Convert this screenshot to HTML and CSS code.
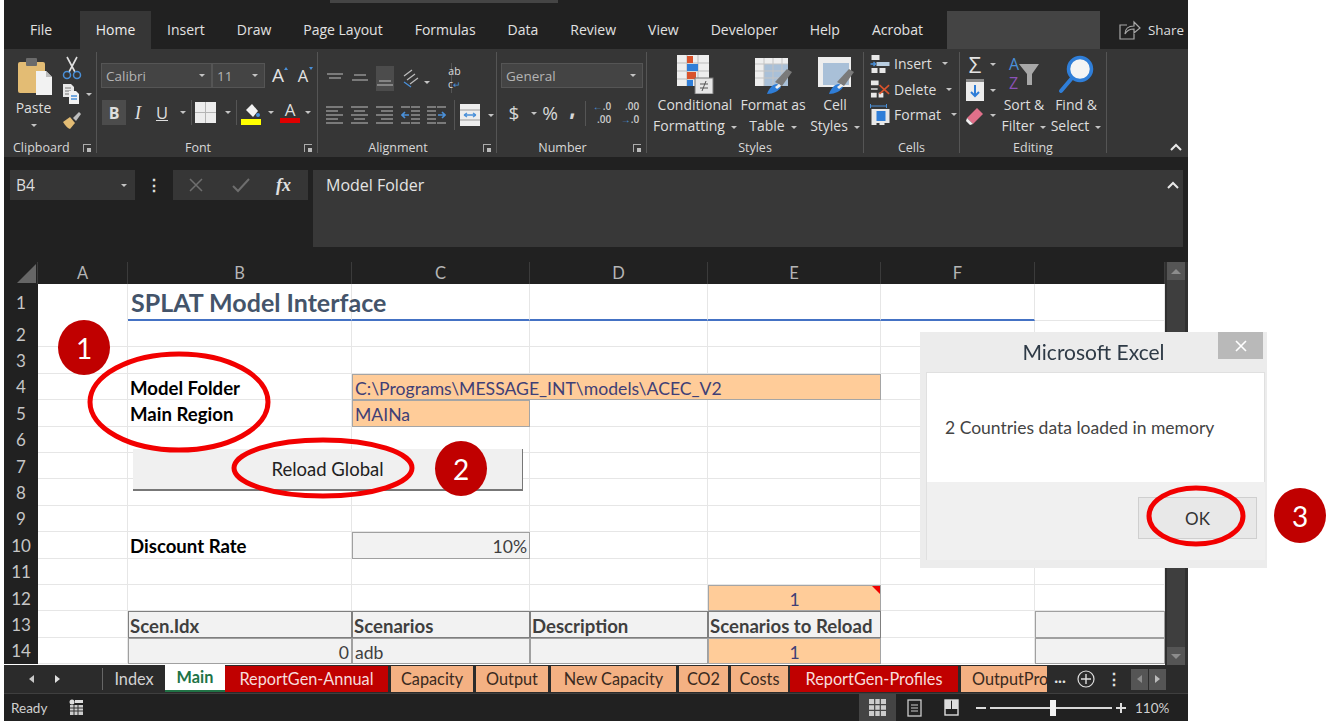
FILE: index.html
```html
<!DOCTYPE html>
<html lang="en">
<head>
<meta charset="utf-8">
<title>SPLAT Model Interface</title>
<link rel="stylesheet" href="styles.css">
</head>
<body>
<div class="stage">
  <div class="window">
    <div class="titlebar"><div class="title-box"></div></div>
    <div class="menubar">
      <span class="menu file">File</span><span class="menu active">Home</span><span class="menu">Insert</span><span class="menu">Draw</span><span class="menu">Page Layout</span><span class="menu">Formulas</span><span class="menu">Data</span><span class="menu">Review</span><span class="menu">View</span><span class="menu">Developer</span><span class="menu">Help</span><span class="menu">Acrobat</span>
      <div class="search-box"></div>
      <div class="share">
        <svg width="22" height="20" viewBox="0 0 22 20"><path d="M8 5H1v14h14v-5M6 14c0-5 3-8 9-8V2l6 6-6 5V9c-4 0-7 1-9 5z" fill="none" stroke="#a8a8a8" stroke-width="1.2"/></svg>
        <span>Share</span>
      </div>
    </div>

    <div class="ribbon">
      <section class="group g-clip">
        <div class="body clip-body">
          <div class="paste">
            <svg width="38" height="40" viewBox="0 0 38 40"><rect x="1" y="6" width="27" height="31" rx="2" fill="#e3bc74"/><rect x="9" y="2" width="11" height="8" rx="1" fill="#6b6b6b"/><path d="M19 15h10l6 6v18H19z" fill="#f2f2f2"/><path d="M29 15v6h6" fill="#bdbdbd"/></svg>
            <span class="paste-label">Paste</span>
            <i class="caret caret-paste"></i>
          </div>
          <div class="clip-tools">
            <span class="tool"><svg width="20" height="24" viewBox="0 0 20 24"><path d="M5 1l8 15M15 1L7 16" stroke="#e0e0e0" stroke-width="1.6" fill="none"/><circle cx="5" cy="19" r="3.5" fill="none" stroke="#4a90d9" stroke-width="1.5"/><circle cx="15" cy="19" r="3.5" fill="none" stroke="#4a90d9" stroke-width="1.5"/></svg></span>
            <span class="tool"><svg width="18" height="22" viewBox="0 0 18 22"><path d="M1 1h8l3 3v10H1z" fill="#e8e8e8"/><path d="M3 5h6M3 8h6M3 11h6" stroke="#777"/><path d="M7 8h7l3 3v10H7z" fill="#f2f2f2"/><path d="M9 13h6M9 16h6" stroke="#4a90d9" stroke-width="1.4"/></svg><i class="caret caret-copy"></i></span>
            <span class="tool"><svg width="20" height="20" viewBox="0 0 20 20"><path d="M1 12l7-5 5 6-5 6c-3-1-5-4-7-7z" fill="#e3bc74"/><path d="M11 8l6-6 2 2-5 7z" fill="#bdbdbd"/></svg></span>
          </div>
        </div>
        <div class="label label-clip"><span>Clipboard</span><i class="launcher"></i></div>
      </section>

      <section class="group g-font">
        <div class="body rows">
          <div class="font-row1">
            <div class="combo"><span>Calibri</span><i class="caret"></i></div>
            <div class="combo"><span>11</span><i class="caret"></i></div>
            <span class="grow-a big">A<b class="up"></b></span>
            <span class="grow-a small">A<b class="down"></b></span>
          </div>
          <div class="font-row2">
            <span class="ib on bold-b">B</span><span class="ib ital">I</span><span class="ib under">U</span><i class="caret"></i><i class="vsep"></i>
            <span class="ib"><svg width="21" height="21" viewBox="0 0 21 21"><rect width="21" height="21" fill="#ededed"/><path d="M10.5 0v21M0 10.5h21" stroke="#b5b5b5"/></svg></span><i class="caret"></i><i class="vsep"></i>
            <span class="ib"><svg width="22" height="24" viewBox="0 0 22 24"><path d="M6 9l6-6 6 7-5 6z" fill="#f2f2f2"/><circle cx="18" cy="14" r="2" fill="#4a90d9"/><rect x="1" y="18" width="20" height="6" fill="#ffff00"/></svg></span><i class="caret"></i>
            <span class="ib color-a">A</span><i class="caret"></i>
          </div>
        </div>
        <div class="label label-launch"><span>Font</span><i class="launcher"></i></div>
      </section>

      <section class="group g-align">
        <div class="body rows">
          <div class="align-row">
            <span class="ib"><svg width="18" height="10" viewBox="0 0 18 10"><path d="M1 1h16M3 5h12" stroke="#bdbdbd" stroke-width="1.2"/></svg></span>
            <span class="ib"><svg width="18" height="10" viewBox="0 0 18 10"><path d="M3 2h12M1 7h16" stroke="#bdbdbd" stroke-width="1.2"/></svg></span>
            <span class="ib on"><svg width="18" height="22" viewBox="0 0 18 22"><path d="M3 14h12M1 18h16" stroke="#bdbdbd" stroke-width="1.2"/></svg></span>
            <span class="ib"><svg width="20" height="20" viewBox="0 0 20 20"><path d="M3 8l8-6M6 12l8-6M9 16l8-6" stroke="#bdbdbd" stroke-width="1.2"/><path d="M3 14l7 5" stroke="#4a90d9" stroke-width="1.3"/></svg></span>
            <span class="cell-caret"><i class="caret"></i></span>
            <i class="vsep tall"></i>
            <span class="ib wrap"><span>ab</span><span>c<em>↵</em></span></span>
          </div>
          <div class="align-row second">
            <span class="ib"><svg width="17" height="20" viewBox="0 0 17 20"><path d="M0 2h17M0 6h12M0 10h17M0 14h12M0 18h17" stroke="#bdbdbd" stroke-width="1.2"/></svg></span>
            <span class="ib"><svg width="17" height="20" viewBox="0 0 17 20"><path d="M0 2h17M3 6h11M0 10h17M3 14h11M0 18h17" stroke="#bdbdbd" stroke-width="1.2"/></svg></span>
            <span class="ib"><svg width="17" height="20" viewBox="0 0 17 20"><path d="M0 2h17M5 6h12M0 10h17M5 14h12M0 18h17" stroke="#bdbdbd" stroke-width="1.2"/></svg></span>
            <span class="ib"><svg width="19" height="20" viewBox="0 0 19 20"><path d="M10 2h9M10 6h9M10 10h9M10 14h9M10 18h9M0 2h9M0 18h9" stroke="#bdbdbd" stroke-width="1.2"/><path d="M8 10H1M4 7l-3 3 3 3" stroke="#4a90d9" stroke-width="1.6" fill="none"/></svg></span>
            <span class="ib"><svg width="19" height="20" viewBox="0 0 19 20"><path d="M0 2h9M0 6h9M0 10h9M0 14h9M0 18h9M10 2h9M10 18h9" stroke="#bdbdbd" stroke-width="1.2"/><path d="M11 10h7M15 7l3 3-3 3" stroke="#4a90d9" stroke-width="1.6" fill="none"/></svg></span>
            <span></span>
            <i class="vsep tall"></i>
            <span class="ib"><svg width="20" height="22" viewBox="0 0 20 22"><rect width="20" height="22" fill="#ededed"/><path d="M0 6h20M0 16h20" stroke="#999"/><path d="M4 11h12M4 11l3-2M4 11l3 2M16 11l-3-2M16 11l-3 2" stroke="#4a90d9" stroke-width="1.3" fill="none"/></svg></span>
            <i class="caret"></i>
          </div>
        </div>
        <div class="label label-launch"><span>Alignment</span><i class="launcher"></i></div>
      </section>

      <section class="group g-num">
        <div class="body rows">
          <div class="num-row1"><div class="combo"><span>General</span><i class="caret"></i></div></div>
          <div class="num-row2">
            <span class="ib sym">$</span><i class="caret"></i><span class="ib sym">%</span><span class="ib sym comma">,</span><i class="vsep"></i>
            <span class="dec"><span><em>←</em>.0</span><span>.00</span></span>
            <span class="dec"><span>.00</span><span><em>→</em>.0</span></span>
          </div>
        </div>
        <div class="label label-launch"><span>Number</span><i class="launcher"></i></div>
      </section>

      <section class="group g-styles">
        <div class="body bigs">
          <div class="big-btn w-cond">
            <svg class="big-ico" width="40" height="40" viewBox="0 0 40 40"><rect x="2" y="1" width="32" height="31" fill="#eee"/><path d="M12 1v31M23 1v31M2 9h32M2 17h32M2 25h32" stroke="#bbb"/><rect x="12" y="2" width="6" height="7" fill="#d9532c"/><rect x="12" y="10" width="11" height="7" fill="#2f7ed8"/><rect x="12" y="18" width="9" height="7" fill="#d9532c"/><rect x="12" y="26" width="6" height="6" fill="#2f7ed8"/><rect x="20" y="24" width="18" height="16" fill="#e6e6e6" stroke="#777"/><path d="M25 30h8M25 34h8M27 37l4-10" stroke="#555" fill="none"/></svg>
            <span>Conditional</span><span>Formatting<i class="caret"></i></span>
          </div>
          <div class="big-btn w-table">
            <svg class="big-ico" width="40" height="40" viewBox="0 0 40 40"><rect x="2" y="4" width="33" height="28" fill="#eee"/><rect x="11" y="10" width="24" height="22" fill="#a9c0d8"/><path d="M11 4v28M20 4v28M29 4v28M2 10h33M2 17h33M2 24h33" stroke="#c4c4c4"/><path d="M22 28l12-13 5 3-10 14z" fill="#7a7a7a"/><path d="M14 40c2-6 6-10 10-10l4 3c-2 4-8 7-14 7z" fill="#2f7ed8"/><path d="M22 33l4-3 2 2-4 3z" fill="#eee"/></svg>
            <span>Format as</span><span>Table<i class="caret"></i></span>
          </div>
          <div class="big-btn w-cell">
            <svg class="big-ico" width="40" height="40" viewBox="0 0 40 40"><rect x="3" y="3" width="33" height="30" fill="#eee"/><rect x="8" y="9" width="26" height="22" fill="#a9c0d8"/><path d="M22 28l12-13 5 3-10 14z" fill="#7a7a7a"/><path d="M14 40c2-6 6-10 10-10l4 3c-2 4-8 7-14 7z" fill="#2f7ed8"/><path d="M22 33l4-3 2 2-4 3z" fill="#eee"/></svg>
            <span>Cell</span><span>Styles<i class="caret"></i></span>
          </div>
        </div>
        <div class="label"><span>Styles</span></div>
      </section>

      <section class="group g-cells">
        <div class="body cell-rows">
          <div class="cell-row"><svg width="20" height="20" viewBox="0 0 20 20"><path d="M1 1h8v5H1zM1 14h6v5H1zM9 14h6v5H9z" fill="#e8e8e8"/><rect x="6" y="8" width="13" height="4" fill="#b8cde0"/><path d="M0 10h5M3 8l2 2-2 2" stroke="#4a90d9" fill="none" stroke-width="1.4"/></svg><span>Insert</span><i class="caret"></i></div>
          <div class="cell-row"><svg width="22" height="20" viewBox="0 0 22 20"><path d="M1 1h8v5H1zM1 14h6v5H1zM9 14h5v5H9z" fill="#e8e8e8"/><path d="M10 6l10 9M20 6L10 15" stroke="#d9532c" stroke-width="1.7"/><path d="M1 9h7v2H1z" fill="#bbb"/></svg><span>Delete</span><i class="caret"></i></div>
          <div class="cell-row"><svg width="20" height="22" viewBox="0 0 20 22"><path d="M0 2h16M0 0v4M16 0v4" stroke="#4a90d9"/><rect x="1" y="5" width="18" height="14" fill="#e8e8e8"/><rect x="6" y="7" width="9" height="10" fill="#2f7ed8"/><path d="M1 20h5M9 20h5" stroke="#e8e8e8" stroke-width="2"/></svg><span>Format</span><i class="caret"></i></div>
        </div>
        <div class="label"><span>Cells</span></div>
      </section>

      <section class="group g-edit">
        <div class="body edit-body">
          <div class="edit-small">
            <div class="edit-row"><span class="sigma">Σ</span><i class="caret"></i></div>
            <div class="edit-row"><svg width="18" height="22" viewBox="0 0 18 22"><rect width="18" height="22" fill="#ededed"/><rect y="0" width="18" height="3" fill="#888"/><path d="M9 6v11M5 13l4 4 4-4" stroke="#2f7ed8" stroke-width="2" fill="none"/></svg><i class="caret"></i></div>
            <div class="edit-row"><svg width="18" height="20" viewBox="0 0 18 20"><path d="M1 12L11 2l6 6-10 10z" fill="#e0708a"/><path d="M1 12l6 6-3 1-4-4z" fill="#f2f2f2"/></svg><i class="caret"></i></div>
          </div>
          <div class="big-btn w-sort">
            <div class="big-ico sort-ico"><span class="az"><b>A</b><u>Z</u></span><svg width="20" height="24" viewBox="0 0 20 24"><path d="M0 1h20l-7 10v11H8V11z" fill="#a8a8a8"/></svg></div>
            <span>Sort &amp;</span><span>Filter<i class="caret"></i></span>
          </div>
          <div class="big-btn w-find">
            <svg class="big-ico" width="36" height="40" viewBox="0 0 36 40"><path d="M3 37l11-13" stroke="#2f7ed8" stroke-width="4" stroke-linecap="round"/><circle cx="22" cy="15" r="11.5" fill="#f4f4f4" stroke="#2f7ed8" stroke-width="3.5"/></svg>
            <span>Find &amp;</span><span>Select<i class="caret"></i></span>
          </div>
        </div>
        <div class="label"><span>Editing</span></div>
      </section>
      <div class="collapse-cell"><svg width="12" height="8" viewBox="0 0 12 8"><path d="M1 7l5-5 5 5" stroke="#e8e8e8" stroke-width="2" fill="none"/></svg></div>
    </div>

    <div class="formula-area">
      <div class="namebox"><span>B4</span><i class="caret"></i></div>
      <span class="dots">⋮</span>
      <div class="fx-buttons">
        <svg width="16" height="16" viewBox="0 0 16 16"><path d="M2 2l12 12M14 2L2 14" stroke="#6e6e6e" stroke-width="1.5"/></svg>
        <svg width="18" height="16" viewBox="0 0 18 16"><path d="M1 9l5 5L17 2" stroke="#6e6e6e" stroke-width="2" fill="none"/></svg>
        <span class="fx">fx</span>
      </div>
      <div class="formula-input"><span>Model Folder</span>
        <svg width="12" height="8" viewBox="0 0 12 8"><path d="M1 7l5-5 5 5" stroke="#e8e8e8" stroke-width="2" fill="none"/></svg>
      </div>
    </div>

    <div class="sheet-area">
      <div class="sheet">
        <div class="hd corner"><i></i></div><div class="hd">A</div><div class="hd">B</div><div class="hd">C</div><div class="hd">D</div><div class="hd">E</div><div class="hd">F</div><div class="hd"></div>

        <div class="rh">1</div><div class="c noline"></div><div class="c title span-b">SPLAT Model Interface</div><div class="c blue"></div><div class="c blue"></div><div class="c blue"></div><div class="c blue"></div><div class="c"></div>
        <div class="rh">2</div><div class="c"></div><div class="c"></div><div class="c"></div><div class="c"></div><div class="c"></div><div class="c"></div><div class="c"></div>
        <div class="rh">3</div><div class="c"></div><div class="c"></div><div class="c"></div><div class="c"></div><div class="c"></div><div class="c"></div><div class="c"></div>
        <div class="rh">4</div><div class="c"></div><div class="c b">Model Folder</div><div class="c input path">C:\Programs\MESSAGE_INT\models\ACEC_V2</div><div class="c"></div><div class="c"></div>
        <div class="rh">5</div><div class="c"></div><div class="c b">Main Region</div><div class="c input">MAINa</div><div class="c"></div><div class="c"></div><div class="c"></div><div class="c"></div>
        <div class="rh">6</div><div class="c"></div><div class="c"></div><div class="c"></div><div class="c"></div><div class="c"></div><div class="c"></div><div class="c"></div>
        <div class="rh">7</div><div class="c"></div><div class="c"></div><div class="c"></div><div class="c"></div><div class="c"></div><div class="c"></div><div class="c"></div>
        <div class="rh">8</div><div class="c"></div><div class="c"></div><div class="c"></div><div class="c"></div><div class="c"></div><div class="c"></div><div class="c"></div>
        <div class="rh">9</div><div class="c"></div><div class="c"></div><div class="c"></div><div class="c"></div><div class="c"></div><div class="c"></div><div class="c"></div>
        <div class="rh">10</div><div class="c"></div><div class="c b">Discount Rate</div><div class="c calc right">10%</div><div class="c"></div><div class="c"></div><div class="c"></div><div class="c"></div>
        <div class="rh">11</div><div class="c"></div><div class="c"></div><div class="c"></div><div class="c"></div><div class="c"></div><div class="c"></div><div class="c"></div>
        <div class="rh">12</div><div class="c"></div><div class="c"></div><div class="c"></div><div class="c"></div><div class="c input mid flag">1</div><div class="c"></div><div class="c"></div>
        <div class="rh">13</div><div class="c"></div><div class="c calc hb">Scen.Idx</div><div class="c calc hb">Scenarios</div><div class="c calc hb">Description</div><div class="c calc hb">Scenarios to Reload</div><div class="c"></div><div class="c calc"></div>
        <div class="rh">14</div><div class="c"></div><div class="c calc right">0</div><div class="c calc">adb</div><div class="c calc"></div><div class="c input mid">1</div><div class="c"></div><div class="c calc"></div>
      </div>
      <div class="vscroll">
        <div class="sb-btn"><i class="tri-up"></i></div>
        <div class="sb-track"></div>
        <div class="sb-btn"><i class="tri-down"></i></div>
      </div>
    </div>

    <div class="tabs-row">
      <div class="tab-nav"><i class="tri-l"></i><i class="tri-r"></i></div>
      <div class="sheet-tabs">
        <span class="st plain">Index</span>
        <span class="st active">Main</span>
        <span class="st red">ReportGen-Annual</span>
        <span class="st peach">Capacity</span>
        <span class="st peach">Output</span>
        <span class="st peach">New Capacity</span>
        <span class="st peach">CO2</span>
        <span class="st peach">Costs</span>
        <span class="st red">ReportGen-Profiles</span>
        <span class="st peach clip">OutputPro</span>
      </div>
      <div class="tab-tools">
        <span class="more">...</span>
        <span class="plus"><svg width="18" height="18" viewBox="0 0 18 18"><circle cx="9" cy="9" r="8" fill="none" stroke="#ddd" stroke-width="1.2"/><path d="M9 4v10M4 9h10" stroke="#ddd" stroke-width="1.4"/></svg></span>
        <span class="dots2">⋮</span>
        <span class="hs-btns"><i><b class="tri-l dim"></b></i><i><b class="tri-r dim"></b></i></span>
      </div>
    </div>

    <div class="status">
      <span class="ready">Ready</span>
      <svg class="macro" width="15" height="17" viewBox="0 0 15 17"><circle cx="3" cy="3" r="2.5" fill="#ddd"/><rect x="6" y="1" width="8" height="3" fill="#ddd"/><rect x="1" y="6" width="13" height="10" fill="#ccc"/><path d="M1 9h13M1 12h13M5 6v10M9 6v10" stroke="#333"/></svg>
      <div class="views">
        <span class="view on"><svg width="17" height="17" viewBox="0 0 17 17"><rect width="17" height="17" fill="#ccc"/><path d="M5.7 0v17M11.3 0v17M0 5.7h17M0 11.3h17" stroke="#444" stroke-width="1.2"/></svg></span>
        <span class="view"><svg width="15" height="18" viewBox="0 0 15 18"><rect x="1" y="1" width="13" height="16" fill="none" stroke="#ccc" stroke-width="1.3"/><path d="M4 6h7M4 9h7M4 12h7" stroke="#ccc"/></svg></span>
        <span class="view"><svg width="15" height="17" viewBox="0 0 15 17"><rect x="1" y="1" width="13" height="15" fill="none" stroke="#ddd" stroke-width="1.4"/><rect x="1" y="1" width="6" height="9" fill="#ddd"/><rect x="8" y="1" width="6" height="9" fill="#ddd"/></svg></span>
      </div>
      <div class="zoom">
        <span class="zm minus"></span>
        <span class="slider"><i></i></span>
        <span class="zm pluss"></span>
        <span class="pct">110%</span>
      </div>
    </div>
  </div>

  <button class="macro-btn">Reload Global</button>

  <svg class="marks" width="1340" height="728" viewBox="0 0 1340 728">
    <ellipse cx="179" cy="402" rx="89" ry="48" fill="none" stroke="#f20000" stroke-width="5"/>
    <ellipse cx="323" cy="468" rx="89" ry="28" fill="none" stroke="#f20000" stroke-width="5"/>
  </svg>

  <span class="num n1">1</span>
  <span class="num n2">2</span>

  <div class="dialog">
    <div class="dlg-head"><span class="dlg-title">Microsoft Excel</span><span class="dlg-x"><svg width="12" height="12" viewBox="0 0 12 12"><path d="M1 1l10 10M11 1L1 11" stroke="#fff" stroke-width="1.6"/></svg></span></div>
    <div class="dlg-msg">2 Countries data loaded in memory</div>
    <div class="dlg-foot"><button class="dlg-ok">OK</button></div>
  </div>
  <svg class="marks" width="1340" height="728" viewBox="0 0 1340 728">
    <ellipse cx="1196" cy="516" rx="47" ry="28" fill="none" stroke="#f20000" stroke-width="5"/>
  </svg>
  <span class="num n3">3</span>
</div>
</body>
</html>
```

FILE: styles.css
```css
* { box-sizing: border-box; }
html, body { margin: 0; padding: 0; background: #fff; }
body { font-family: "Open Sans", "Liberation Sans", sans-serif; color: #ddd; overflow: hidden; }
i, em, u { font-style: normal; text-decoration: none; }

.stage { position: relative; width: 1340px; height: 728px; overflow: hidden; filter: blur(0.5px); }
.window { width: 1184px; height: 720px; margin-left: 4px; background: #212121; display: flex; flex-direction: column; }

.titlebar { height: 11px; flex: none; padding-left: 326px; }
.title-box { width: 228px; height: 3px; background: #454545; }

.menubar { height: 38px; flex: none; display: flex; align-items: stretch; font-size: 14px; color: #e2e2e2; }
.menu { padding: 0 16px; line-height: 38px; white-space: nowrap; }
.menu.file { width: 76px; padding: 0 0 0 26px; }
.menu.active { background: #363636; padding: 0; width: 71px; text-align: center; color: #eee; }
.search-box { width: 153px; background: #444; margin-left: auto; }
.share { display: flex; align-items: center; width: 88px; padding-left: 19px; gap: 7px; font-size: 13.4px; color: #ddd; flex: none; }

.ribbon { height: 108px; flex: none; background: #363636; padding-top: 3px; display: flex; font-size: 14px; color: #dedede; }
.group { display: flex; flex-direction: column; height: 101px; border-right: 1px solid #555; flex: none; }
.body { height: 86px; flex: none; }
.label { position: relative; height: 15px; text-align: center; font-size: 12.5px; line-height: 19px; color: #d8d8d8; }
.label-launch { padding-right: 22px; }
.launcher { position: absolute; right: 5px; top: 6px; width: 8px; height: 8px; border-left: 1px solid #aaa; border-top: 1px solid #aaa; }
.launcher::after { content: ""; position: absolute; right: 0; bottom: 0; width: 4px; height: 4px; background: #bbb; }

.caret { display: inline-block; width: 0; height: 0; border-left: 3px solid transparent; border-right: 3px solid transparent; border-top: 3px solid #c4c4c4; flex: none; }
.vsep { display: block; width: 1px; background: #555; height: 25px; }
.vsep.tall { height: 30px; align-self: start; }
.ib { display: flex; align-items: center; justify-content: center; height: 25px; }
.ib.on { background: #4c4c4c; }

.g-clip { width: 93px; }
.clip-body { display: flex; padding-left: 9px; }
.paste { width: 44px; display: flex; flex-direction: column; align-items: center; padding-top: 4px; }
.paste svg { margin-bottom: 1px; margin-left: 2px; }
.paste-label { line-height: 21px; margin-top: 0; margin-left: -3px; }
.caret-paste { margin-top: 6px; margin-left: -3px; }
.clip-tools { display: flex; flex-direction: column; width: 36px; padding-left: 5px; padding-top: 3px; }
.tool { display: flex; align-items: center; gap: 5px; height: 26px; }
.caret-copy { margin-left: 1px; }
.label-clip { text-align: left; padding-left: 9px; }

.rows { display: flex; flex-direction: column; padding-top: 11px; gap: 12px; }
.g-font { width: 221px; padding-left: 4px; }
.font-row1 { display: flex; align-items: center; height: 25px; }
.combo { display: flex; align-items: center; justify-content: space-between; height: 25px; background: #444; border: 1px solid #555; padding: 0 6px 0 4px; font-size: 13.5px; color: #b4b4b4; }
.combo:nth-child(1) { width: 111px; }
.combo:nth-child(2) { width: 53px; }
.grow-a { position: relative; display: block; font-size: 19px; line-height: 25px; color: #e4e4e4; text-align: center; width: 22px; margin-left: 2px; }
.grow-a.small { font-size: 16.5px; margin-left: 3px; }
.up, .down { position: absolute; top: 4px; right: 1px; width: 0; height: 0; border-left: 2px solid transparent; border-right: 2px solid transparent; }
.up { border-bottom: 3px solid #4a90d9; }
.down { border-top: 3px solid #4a90d9; }
.font-row2 { display: grid; grid-template-columns: 24px 24px 24px 17px 1px 27px 17px 1px 27px 14px 24px 12px; align-items: center; justify-items: center; margin-left: 1px; height: 25px; }
.bold-b { font-weight: 700; font-size: 16px; width: 24px; }
.ital { font-family: "Liberation Serif", serif; font-style: italic; font-size: 19px; }
.under { text-decoration: underline; font-size: 16.5px; }
.color-a { font-size: 17px; border-bottom: 5px solid #e00000; height: 21px; width: 20px; line-height: 16px; }

.g-align { width: 179px; padding-left: 4px; }
.align-row { display: grid; grid-template-columns: 25px 25px 25px 27px 25px 5px 1px 30px 12px; align-items: center; justify-items: center; height: 25px; }
.cell-caret { justify-self: start; }
.wrap { flex-direction: column; font-size: 10.5px; line-height: 13px; color: #ddd; }
.wrap em { color: #4a90d9; font-size: 9px; }

.g-num { width: 150px; padding-left: 4px; }
.num-row1 .combo { width: 142px; }
.num-row2 { display: grid; grid-template-columns: 26px 13px 20px 25px 1px 32px 24px; align-items: center; justify-items: center; height: 25px; }
.sym { font-size: 19px; color: #d6d6d6; }
.comma { font-weight: 800; margin-top: -8px; }
.dec { display: flex; flex-direction: column; font-size: 10px; line-height: 13px; text-align: right; color: #ccc; font-weight: 600; }
.dec em { color: #4a90d9; }

.bigs, .edit-body { display: flex; }
.big-btn { display: flex; flex-direction: column; align-items: center; line-height: 21px; white-space: nowrap; padding-top: 2px; flex: none; }
.big-ico { height: 40px; display: flex; }
.big-btn .caret { margin-left: 6px; vertical-align: middle; }
.g-styles { width: 217px; }
.w-cond { width: 91px; padding-left: 5px; }
.w-table { width: 70px; }
.w-cell { width: 54px; }

.g-cells { width: 96px; }
.cell-rows { display: flex; flex-direction: column; padding-left: 6px; margin: -1px 0 1px; }
.cell-row { height: 25.5px; display: flex; align-items: center; gap: 3px; }
.cell-row svg { width: 21px; }
.cell-row .caret { margin-left: 7px; }

.g-edit { width: 147px; }
.edit-small { width: 38px; padding-left: 6px; flex: none; }
.edit-row { height: 25.5px; display: flex; align-items: center; gap: 6px; }
.edit-row .caret { margin-left: 0; }
.sigma { font-size: 22px; width: 18px; text-align: center; color: #e4e4e4; line-height: 25px; }
.w-sort { width: 52px; }
.w-find { width: 52px; }
.sort-ico { align-items: flex-start; gap: 0; }
.az { display: flex; flex-direction: column; font-size: 16px; line-height: 19px; padding-top: 1px; font-weight: 400; }
.az b { color: #4a90d9; font-weight: 400; }
.az u { color: #8a52b8; }
.sort-ico svg { margin-top: 9px; }
.collapse-cell { flex: 1; display: flex; align-items: flex-end; justify-content: flex-end; padding: 0 6px 6px 0; }

.formula-area { height: 105px; flex: none; padding: 13px 5px 15px 6px; display: flex; align-items: flex-start; }
.namebox { width: 125px; height: 30px; background: #363636; display: flex; align-items: center; justify-content: space-between; padding: 0 8px 0 6px; font-size: 15.5px; color: #ddd; }
.dots { width: 38px; text-align: center; font-size: 16px; line-height: 30px; font-weight: 700; color: #ddd; }
.fx-buttons { width: 135px; height: 30px; background: #363636; display: flex; align-items: center; padding-left: 15px; gap: 28px; }
.fx { font-family: "Liberation Serif", serif; font-style: italic; font-weight: 700; font-size: 18px; color: #e0e0e0; margin-left: -2px; }
.formula-input { width: 870px; margin-left: 5px; height: 77px; background: #383838; display: flex; justify-content: space-between; padding: 5px 4px 0 13px; font-size: 16px; line-height: 20px; color: #e4e4e4; }
.formula-input svg { margin-top: 6px; }

.sheet-area { display: flex; height: 403px; flex: none; }
.sheet { width: 1161px; display: grid; grid-template-columns: 34px 90px 224px 178px 178px 173px 154px 130px; grid-template-rows: 22px 37px repeat(13, 26.4px); font-family: Lato, "Liberation Sans", sans-serif; font-size: 17.6px; background: #fff; color: #222; }
.hd { background: #212121; color: #b5b5b5; text-align: center; font-size: 16.5px; line-height: 22px; border-right: 1px solid #3b3b3b; }
.corner { position: relative; }
.corner i { position: absolute; right: 1px; bottom: 1px; width: 0; height: 0; border-left: 19px solid transparent; border-bottom: 19px solid #666; }
.rh { background: #212121; color: #c6c6c6; text-align: center; font-size: 17px; display: flex; align-items: center; justify-content: center; }
.c { border-right: 1px solid #e6e6e6; border-bottom: 1px solid #e6e6e6; padding: 3px 2px 0; display: flex; align-items: center; white-space: nowrap; min-width: 0; }
.noline { border-bottom-color: #fff; }
.title { font-size: 25px; font-weight: 700; color: #44546a; padding-left: 3px; padding-top: 1px; }
.title, .blue { border-bottom: 2px solid #4472c4; }
.b { font-weight: 700; font-size: 18.6px; color: #000; }
.input { background: #ffcc99; color: #3f3f76; border: 1px solid #a5a5a5; }
.path { grid-column: span 3; }
.calc { background: #f2f2f2; color: #3f3f3f; border: 1px solid #a0a0a0; }
.hb { font-weight: 700; font-size: 18.6px; border-color: #7f7f7f; padding-left: 1px; }
.right { justify-content: flex-end; }
.mid { justify-content: center; }
.flag { position: relative; }
.flag::after { content: ""; position: absolute; right: 0; top: 0; border-left: 8px solid transparent; border-top: 8px solid #f00000; }

.vscroll { flex: 1; display: flex; flex-direction: column; background: #303030; padding: 0 3px 0 2px; }
.sb-btn { height: 18px; background: #555; display: flex; align-items: center; justify-content: center; flex: none; }
.sb-track { flex: 1; background: #3e3e3e; }
.tri-up, .tri-down { width: 0; height: 0; border-left: 5px solid transparent; border-right: 5px solid transparent; }
.tri-up { border-bottom: 5px solid #8c8c8c; }
.tri-down { border-top: 5px solid #8c8c8c; }

.tabs-row { height: 29px; flex: none; display: flex; background: #2b2b2b; border-bottom: 1px solid #3f3f3f; font-family: Lato, "Liberation Sans", sans-serif; font-size: 16.3px; }
.tab-nav { width: 98px; display: flex; align-items: center; padding-left: 25px; gap: 21px; }
.tri-l, .tri-r { display: block; width: 0; height: 0; border-top: 4px solid transparent; border-bottom: 4px solid transparent; }
.tri-l { border-right: 5px solid #c8c8c8; }
.tri-r { border-left: 5px solid #e0e0e0; }
.sheet-tabs { width: 944px; display: grid; grid-template-columns: 62px 60px 165px 85px 75px 128px 52px 60px 170px 87px; border-left: 1px solid #666; margin: 3px 0 3px 0; }
.st { display: flex; align-items: center; justify-content: center; margin: -2px 2px -2px 1px; padding-bottom: 2px; white-space: nowrap; overflow: hidden; color: #3a2a1e; }
.st.plain { color: #d2d2d2; margin: 0; }
.st.active { background: #fff; color: #217346; font-weight: 700; border-bottom: 2px solid #217346; margin: -3px 0 -2px 0; }
.st.red { background: #c00000; color: #f7dcdc; margin-left: 0; }
.st.peach { background: #f4b183; }
.st.clip { justify-content: flex-start; padding-left: 11px; margin-right: 0; }
.tab-tools { flex: 1; display: flex; align-items: center; color: #e0e0e0; }
.more { width: 34px; text-align: center; font-weight: 700; margin-top: -6px; margin-left: -3px; }
.plus { width: 19px; display: flex; margin-left: 0; }
.dots2 { width: 36px; text-align: center; font-weight: 700; font-size: 16px; }
.hs-btns { display: flex; gap: 1px; margin-left: -1px; }
.hs-btns i { width: 17px; height: 21px; background: #555; display: flex; align-items: center; justify-content: center; }
.tri-l.dim { border-right-color: #8c8c8c; }
.tri-r.dim { border-left-color: #bbb; }

.status { height: 27px; flex: none; display: flex; align-items: center; font-family: Lato, "Liberation Sans", sans-serif; font-size: 13.5px; color: #d0d0d0; padding-left: 7px; background: #212121; }
.ready { width: 58px; }
.views { margin-left: 775px; display: flex; align-self: stretch; width: 111px; }
.view { width: 37px; display: flex; align-items: center; justify-content: center; }
.view.on { background: #444; }
.zoom { display: flex; align-items: center; margin-left: 6px; flex: none; }
.zm { position: relative; width: 10px; height: 2px; background: #ddd; display: block; }
.pluss::after { content: ""; position: absolute; left: 4px; top: -4px; width: 2px; height: 10px; background: #ddd; }
.slider { position: relative; display: block; width: 122px; height: 2px; background: #d8d8d8; margin: 0 4px; }
.slider i { position: absolute; left: 60px; top: -7px; width: 6px; height: 16px; background: #f2f2f2; }
.pct { margin-left: 9px; font-size: 13.5px; }

.macro-btn { position: absolute; left: 133px; top: 449px; width: 390px; height: 42px; background: #f0f0f0; border: 0; border-right: 1px solid #777; border-bottom: 2px solid #777; font-family: Lato, "Liberation Sans", sans-serif; font-size: 18.5px; color: #222; padding: 0; }

.marks { position: absolute; left: 0; top: 0; pointer-events: none; }
.num { position: absolute; width: 52px; height: 55px; border-radius: 50%; background: #c00000; color: #fff; font-family: Lato, "Liberation Sans", sans-serif; font-size: 28px; display: flex; align-items: center; justify-content: center; }
.n1 { left: 58px; top: 320px; }
.n2 { left: 435px; top: 441px; }
.n3 { left: 1274px; top: 488px; }

.dialog { position: absolute; left: 920px; top: 332px; width: 347px; height: 236px; background: #ececec; padding: 0 2px 8px 6px; display: flex; flex-direction: column; font-family: Lato, "Liberation Sans", sans-serif; }
.dlg-head { height: 40px; flex: none; position: relative; text-align: center; }
.dlg-title { font-size: 21px; line-height: 40px; color: #2e3a46; margin-left: -4px; }
.dlg-x { position: absolute; right: 2px; top: 0; width: 45px; height: 27px; background: #b9b9b9; display: flex; align-items: center; justify-content: center; }
.dlg-msg { height: 110px; flex: none; background: #fff; border: 1px solid #e0e0e0; border-bottom: 0; padding: 0 0 0 18px; display: flex; align-items: center; font-size: 17.5px; color: #444; }
.dlg-foot { flex: 1; background: #f0f0f0; border-left: 1px solid #e0e0e0; display: flex; justify-content: flex-end; padding: 15px 8px 0 0; }
.dlg-ok { width: 119px; height: 42px; background: #e8e8e8; border: 1px solid #cfcfcf; font-family: Lato, "Liberation Sans", sans-serif; font-size: 17px; color: #333; padding: 0; }
```
